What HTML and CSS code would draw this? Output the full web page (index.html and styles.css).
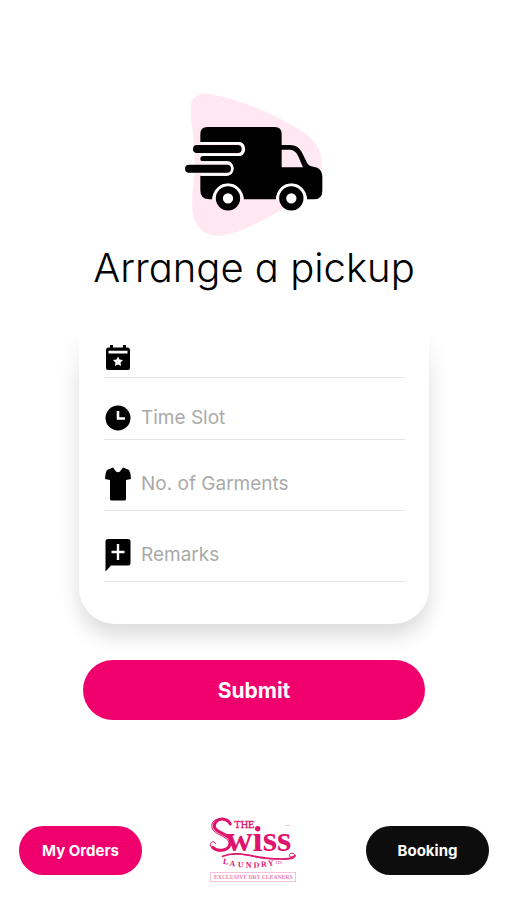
FILE: index.html
```html
<!DOCTYPE html>
<html lang="en">
<head>
<meta charset="utf-8">
<meta name="viewport" content="width=device-width, initial-scale=1">
<title>Arrange a pickup</title>
<link rel="stylesheet" href="styles.css">
</head>
<body>
<main class="page">
  <svg class="hero" viewBox="0 0 504 480" aria-hidden="true">
    <path fill="#ffe8f2" d="M62 86C62 52 84 36 116 42C214 58 322 104 402 158C442 184 456 216 456 260C454 300 420 340 352 376C290 420 206 460 152 467C104 470 76 444 68 398C62 340 76 300 74 240C74 180 62 130 62 86Z"/>
    <path d="M91 186V162Q91 141 112 141H314Q335 141 335 162V195H359C378 195 389 203 397 220L411 248Q416 258 430 260C448 262 457 274 457 292V332Q457 358 431 358H411C408 329 388 311 364 311C340 311 321 329 318 358H221C218 329 199 311 174 311C149 311 130 329 127 358H118Q91 358 91 331V287H171C197 287 197 244 171 244H100Q91 244 91 236Q91 228 100 228H206C232 228 232 186 206 186Z"/>
    <path fill="#ffe8f2" d="M335 209H358C371 209 378 216 384 227L399 262H335Z"/>
    <path fill="none" stroke="#fff" stroke-width="6" d="M92 189H206C226 189 226 225 206 225H92M92 247H171C193 247 193 284 171 284H92"/>
    <rect x="69" y="195" width="146" height="24" rx="12"/>
    <rect x="45" y="254" width="138" height="24" rx="12"/>
    <g fill="#fff" stroke="#000" stroke-width="21"><circle cx="174" cy="355" r="26"/><circle cx="364" cy="355" r="26"/></g>
    <path fill="none" stroke="#fff" stroke-width="7" d="M130 358C132 332 150 314 174 314S216 332 218 358M321 358C323 332 340 314 364 314S406 332 408 358"/>
  </svg>
  <h1 class="title">Arrange a pickup</h1>

  <form class="pickup">
    <div class="card">
      <div class="field">
        <label for="date"><svg class="icon" viewBox="0 0 26 34" role="img" aria-label="Date"><path d="M5 4h3V6.500h10V4h3V6.500h1.500Q25 6.500 25 9.500V27Q25 29 23 29H3Q1 29 1 27V9.500Q1 6.500 3.500 6.500H5Z"/><path fill="#fff" d="M3.500 9.800H22.500V12.600H3.500ZM13 15.500l1.500 3.100 3.500.5-2.500 2.500.6 3.500-3.100-1.700-3.100 1.700.6-3.500L8 19.100l3.500-.5Z"/></svg></label>
        <input id="date" type="text">
      </div>
      <div class="field">
        <label for="slot"><svg class="icon" viewBox="0 0 26 34" role="img" aria-label="Time slot"><circle cx="13" cy="17" r="12.500"/><path fill="none" stroke="#fff" stroke-width="2.600" d="M13 10v7.500h7"/></svg></label>
        <input id="slot" type="text" placeholder="Time Slot">
      </div>
      <div class="field tall">
        <label for="garments"><svg class="icon" viewBox="0 0 26 34" role="img" aria-label="Number of garments"><path d="M8 .5L11 4.500Q13 6 15 4.500L18 .5L23.500 2.800Q25.500 4 26 12L21 13V32Q21 33.500 19.500 33.500H6.500Q5 33.500 5 32V13L0 12Q.5 4 2.500 2.800Z"/></svg></label>
        <input id="garments" type="text" placeholder="No. of Garments">
      </div>
      <div class="field tall">
        <label for="remarks"><svg class="icon" viewBox="0 0 26 34" role="img" aria-label="Remarks"><path d="M3 1H23Q25.500 1 25.500 3.500V25Q25.500 27.500 23 27.500H6L.5 33.500V3.500Q.5 1 3 1Z"/><path stroke="#fff" stroke-width="2.400" d="M13 6V22M6.500 14H19.500"/></svg></label>
        <input id="remarks" type="text" placeholder="Remarks">
      </div>
    </div>
    <button class="submit" type="submit">Submit</button>
  </form>
</main>

<footer class="bar">
  <button class="pill" type="button">My Orders</button>
  <svg class="logo" viewBox="0 0 360 270" role="img" aria-label="The Swiss Laundry, exclusive dry cleaners">
    <g fill="#df146c" font-family="Liberation Serif, serif">
      <text><tspan x="121" y="70" font-size="31" stroke="#df146c">THE</tspan><tspan x="96" y="137" font-size="110" font-weight="700">wiss</tspan></text>
      <text x="274" y="64" font-size="8">TM</text>
      <g font-size="24" font-weight="700">
        <text x="86" y="176" transform="rotate(8 86 176)">L</text>
        <text x="106" y="182" transform="rotate(7 106 182)">A</text>
        <text x="131" y="186" transform="rotate(3 131 186)">U</text>
        <text x="155" y="188">N</text>
        <text x="179" y="188" transform="rotate(-3 179 188)">D</text>
        <text x="202" y="186" transform="rotate(-6 202 186)">R</text>
        <text x="223" y="183" transform="rotate(-8 223 183)">Y</text>
      </g>
      <text x="245" y="176" font-size="10">LTD</text>
    </g>
    <g fill="none" stroke="#df146c" stroke-linecap="round">
      <path stroke-width="9" d="M109 57C101 40 78 38 66 50C54 64 63 76 82 84C106 94 115 105 107 121C99 139 70 140 56 127"/>
      <path stroke-width="3" d="M109 57C88 36 60 38 54 57C49 81 75 87 90 96C109 106 111 128 92 134C70 142 49 132 49 119C50 107 64 108 65 117"/>
      <path stroke-width="5" d="M86 154C125 136 170 154 214 159C251 163 294 164 302 152"/>
      <path stroke-width="3" d="M104 149C150 140 190 164 244 162C280 162 301 165 304 153C303 142 286 143 286 151Q287 158 294 156"/>
    </g>
    <rect x="50" y="202" width="255" height="28" fill="#fff" stroke="#f3a6c8" stroke-width="2"/>
    <text x="178" y="222" text-anchor="middle" font-family="Liberation Serif, serif" font-size="17" font-weight="700" fill="#ec7fae">EXCLUSIVE DRY CLEANERS</text>
  </svg>
  <button class="pill dark" type="button">Booking</button>
</footer>
</body>
</html>
```
FILE: styles.css
```css
* {
  box-sizing: border-box;
}

body {
  margin: 0;
  min-height: 100vh;
  display: flex;
  flex-direction: column;
  background: #fff;
  color: #000;
  font-family: Inter, "Liberation Sans", sans-serif;
}

.page {
  flex: 1;
  padding: 80px 78px 0 79px;
  display: flex;
  flex-direction: column;
}

.hero {
  width: 168px;
  height: 160px;
  align-self: center;
}

.title {
  margin: 4px -20px 30px;
  font-size: 40px;
  line-height: 48px;
  font-weight: 300;
  font-feature-settings: "cv11";
  text-align: center;
  white-space: nowrap;
}

.pickup {
  display: flex;
  flex-direction: column;
}

.card {
  position: relative;
  margin-bottom: 36px;
  padding: 16px 24px 42px 25px;
}

.card::before,
.card::after {
  content: "";
  position: absolute;
  z-index: -1;
}

.card::before {
  inset: 0;
  border-radius: 0 0 36px 36px;
  box-shadow: 0 12px 20px rgba(0, 0, 0, 0.14);
}

.card::after {
  inset: -20px -40px auto;
  height: 80px;
  background: linear-gradient(#fff 28px, rgba(255, 255, 255, 0));
}

.field {
  display: flex;
  align-items: center;
  gap: 10px;
  height: 40px;
  border-bottom: 1px solid #e4e4e4;
}

.field + .field {
  height: 44px;
  margin-top: 18px;
}

.field + .tall {
  height: 54px;
  margin-top: 17px;
}

.icon {
  display: block;
  width: 26px;
  height: 34px;
  margin-left: 1px;
}

.field input {
  flex: 1;
  min-width: 0;
  padding: 0;
  border: 0;
  outline: 0;
  background: none;
  font: 400 19px/24px Inter, "Liberation Sans", sans-serif;
  color: #222;
}

.field input::placeholder {
  color: #aaa;
  opacity: 1;
}

button {
  border: 0;
  padding: 0;
  color: #fff;
  background: #f0006c;
  font-family: inherit;
  font-weight: 700;
  cursor: pointer;
}

.submit {
  height: 60px;
  margin: 0 4px;
  border-radius: 30px;
  font-size: 21px;
}

.bar {
  display: flex;
  align-items: center;
  justify-content: space-between;
  padding: 0 18px 5px 19px;
}

.pill {
  width: 123px;
  height: 49px;
  border-radius: 25px;
  font-size: 15px;
}

.dark {
  background: #0d0d0d;
}

.logo {
  width: 120px;
  height: 90px;
}
```
